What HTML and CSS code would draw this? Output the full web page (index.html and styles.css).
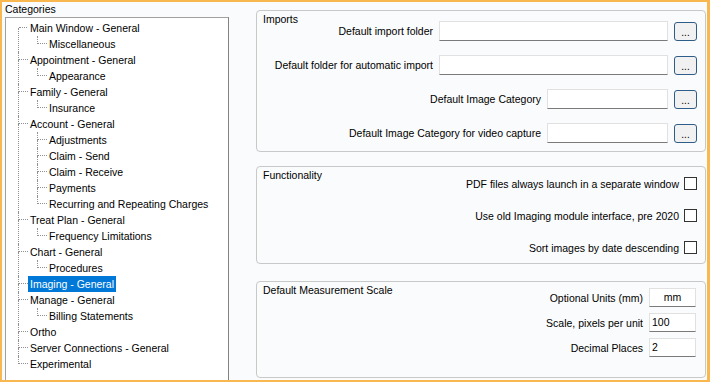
FILE: index.html
```html
<!DOCTYPE html>
<html>
  <head>
    <title>Imaging - General</title>
    <link rel="stylesheet" href="styles.css">
  </head>
  <body>
    <div class="window">
      <!-- Categories tree -->
      <div class="side">
        <div class="side-title">Categories</div>
        <div class="tree-box">
          <ul class="tree">
            <li><span class="node">Main Window - General</span>
              <ul><li><span class="node">Miscellaneous</span></li></ul>
            </li>
            <li><span class="node">Appointment - General</span>
              <ul><li><span class="node">Appearance</span></li></ul>
            </li>
            <li><span class="node">Family - General</span>
              <ul><li><span class="node">Insurance</span></li></ul>
            </li>
            <li><span class="node">Account - General</span>
              <ul>
                <li><span class="node">Adjustments</span></li>
                <li><span class="node">Claim - Send</span></li>
                <li><span class="node">Claim - Receive</span></li>
                <li><span class="node">Payments</span></li>
                <li><span class="node">Recurring and Repeating Charges</span></li>
              </ul>
            </li>
            <li><span class="node">Treat Plan - General</span>
              <ul><li><span class="node">Frequency Limitations</span></li></ul>
            </li>
            <li><span class="node">Chart - General</span>
              <ul><li><span class="node">Procedures</span></li></ul>
            </li>
            <li><span class="node selected">Imaging - General</span></li>
            <li><span class="node">Manage - General</span>
              <ul><li><span class="node">Billing Statements</span></li></ul>
            </li>
            <li><span class="node">Ortho</span></li>
            <li><span class="node">Server Connections - General</span></li>
            <li><span class="node">Experimental</span></li>
          </ul>
        </div>
      </div>

      <!-- Settings -->
      <div class="main">
        <div class="group group-imports">
          <div class="group-title">Imports</div>
          <div class="field-row">
            <span class="label">Default import folder</span>
            <span class="textbox wide"></span>
            <button class="browse">...</button>
          </div>
          <div class="field-row">
            <span class="label">Default folder for automatic import</span>
            <span class="textbox wide"></span>
            <button class="browse">...</button>
          </div>
          <div class="field-row">
            <span class="label">Default Image Category</span>
            <span class="textbox narrow"></span>
            <button class="browse">...</button>
          </div>
          <div class="field-row">
            <span class="label">Default Image Category for video capture</span>
            <span class="textbox narrow"></span>
            <button class="browse">...</button>
          </div>
        </div>

        <div class="group group-functions">
          <div class="group-title">Functionality</div>
          <div class="check-row">
            <span class="label">PDF files always launch in a separate window</span>
            <span class="checkbox"></span>
          </div>
          <div class="check-row">
            <span class="label">Use old Imaging module interface, pre 2020</span>
            <span class="checkbox"></span>
          </div>
          <div class="check-row">
            <span class="label">Sort images by date descending</span>
            <span class="checkbox"></span>
          </div>
        </div>

        <div class="group group-scale">
          <div class="group-title">Default Measurement Scale</div>
          <div class="scale-row">
            <span class="label">Optional Units (mm)</span>
            <span class="textbox small center">mm</span>
          </div>
          <div class="scale-row">
            <span class="label">Scale, pixels per unit</span>
            <span class="textbox small">100</span>
          </div>
          <div class="scale-row">
            <span class="label">Decimal Places</span>
            <span class="textbox small">2</span>
          </div>
        </div>
      </div>
    </div>
  </body>
</html>
```

FILE: styles.css
```css
body {
  margin: 0;
  padding: 0;
  font-family: "Liberation Sans", Arial, sans-serif;
  font-size: 10.5px;
  color: #000;
}
.window {
  width: 710px;
  height: 382px;
  box-sizing: border-box;
  border: 2px solid #f9b84f;
  border-right-width: 3px;
  background-color: #fafbfc;
  display: flex;
  overflow: hidden;
}

/* Left tree */
.side {
  width: 224px;
  padding-left: 3px;
  display: flex;
  flex-direction: column;
}
.side-title {
  height: 15px;
  line-height: 14px;
}
.tree-box {
  flex: 1;
  margin-bottom: -2px;
  background-color: #fff;
  border: 1px solid #a0a0a0;
  border-right-color: #828282;
  padding-top: 2px;
}
.tree,
.tree ul {
  list-style: none;
  margin: 0;
}
.tree {
  padding-left: 12px;
}
.tree ul {
  padding-left: 9px;
}
.tree li {
  position: relative;
  padding-left: 10px;
}
.tree li::before {
  content: "";
  position: absolute;
  left: 0;
  top: 0;
  width: 9px;
  height: 7px;
  border-left: 1px dotted #8f8f8f;
  border-bottom: 1px dotted #8f8f8f;
}
.tree > li:first-child::before {
  border-left: none;
  left: 1px;
  width: 8px;
}
.tree li::after {
  content: "";
  position: absolute;
  left: 0;
  top: 8px;
  bottom: 0;
  border-left: 1px dotted #8f8f8f;
}
.tree li:last-child::after {
  display: none;
}
.node {
  display: inline-block;
  height: 16px;
  line-height: 16px;
  padding: 0 2px;
  white-space: nowrap;
}
.node.selected {
  background-color: #0078d7;
  color: #fff;
}

/* Right side */
.main {
  margin-left: 27px;
  width: 450px;
  padding-top: 8px;
  display: flex;
  flex-direction: column;
}
.group {
  box-sizing: border-box;
  border: 1px solid #c8c8c8;
  border-radius: 4px;
  padding: 1px 8px 0 6px;
}
.group-title {
  height: 9px;
  line-height: 14px;
}
.group-imports {
  height: 142px;
}
.group-functions {
  height: 98px;
  margin-top: 14px;
}
.group-scale {
  height: 97px;
  margin-top: 17px;
}
.field-row {
  display: flex;
  justify-content: flex-end;
  align-items: center;
  height: 20px;
  margin-bottom: 14px;
}
.label {
  white-space: nowrap;
  margin-right: 6px;
}
.textbox {
  box-sizing: border-box;
  height: 20px;
  background-color: #fff;
  border: 1px solid #e1e1e1;
  border-bottom-color: #7a7a7a;
  line-height: 18px;
  padding-left: 2px;
}
.textbox.wide {
  width: 229px;
}
.textbox.narrow {
  width: 121px;
}
.textbox.small {
  width: 47px;
  height: 19px;
  line-height: 17px;
}
.textbox.center {
  text-align: center;
  padding-left: 0;
}
.browse {
  box-sizing: border-box;
  width: 23px;
  height: 19px;
  margin-left: 6px;
  padding: 2px 0 0;
  border: 1px solid #2f5d89;
  border-radius: 3px;
  background-color: #f1f1f1;
  font-family: inherit;
  font-size: 10px;
  line-height: 15px;
  color: #000;
}
.check-row {
  display: flex;
  justify-content: flex-end;
  align-items: center;
  height: 13px;
  margin-bottom: 19px;
}
.group-functions .check-row:first-of-type {
  margin-top: 3px;
}
.check-row .label {
  margin-right: 5px;
}
.checkbox {
  box-sizing: border-box;
  width: 13px;
  height: 13px;
  border: 1px solid #333;
  background-color: #fff;
}
.scale-row {
  display: flex;
  justify-content: flex-end;
  align-items: center;
  height: 19px;
  margin-bottom: 6px;
  margin-right: 1px;
}
.group-scale .group-title {
  height: 5px;
}
```
